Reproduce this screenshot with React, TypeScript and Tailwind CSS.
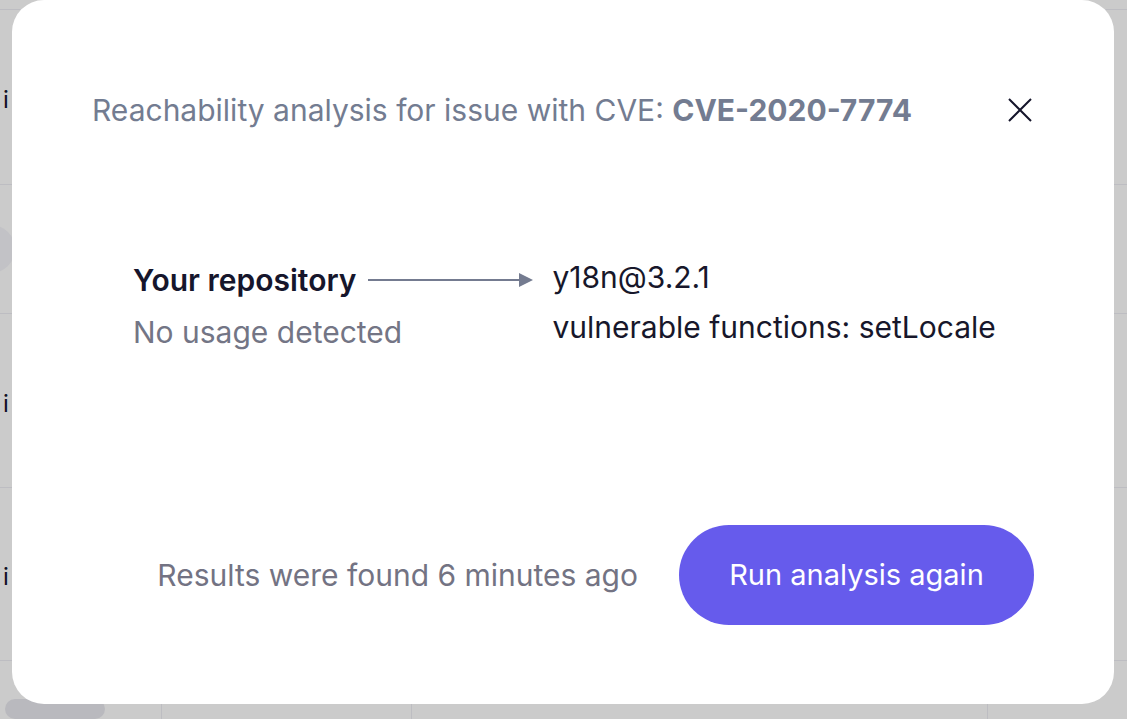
import React from 'react';

const rows = [
  { height: 'h-[178px]', letter: true },
  { height: 'h-[132px]', letter: false },
  { height: 'h-[177px]', letter: true },
  { height: 'h-[176px]', letter: true },
];

function BackgroundPage() {
  return (
    <div className="h-full w-full bg-[#cbcbcb] flex flex-col">
      <div className="h-[10px] border-b border-[#bdbdc2]" />
      {rows.map((row, i) => (
        <div key={i} className={`${row.height} border-b border-[#bdbdc2] flex items-center pl-[3px] pt-[6px] text-[24px] text-[#101025]`}>
          {row.letter ? 'i' : <div className="h-[48px] w-[48px] -ml-[36px] -mt-[6px] rounded-full bg-[#c2c2c6]" />}
        </div>
      ))}
      <div className="flex-1 flex">
        <div className="w-[162px] border-r border-[#bdbdc2] pt-[38px] pl-[5px]">
          <div className="h-[20px] w-[100px] rounded-full bg-[#b9b9be]" />
        </div>
        <div className="w-[250px] border-r border-[#bdbdc2]" />
        <div className="w-[576px] border-r border-[#bdbdc2]" />
      </div>
    </div>
  );
}

function Arrow() {
  return (
    <svg width="165" height="16" viewBox="0 0 165 16" className="shrink-0">
      <line x1="0" y1="8" x2="152" y2="8" stroke="#747b90" strokeWidth="2" />
      <polygon points="151,1 165,8 151,15" fill="#747b90" />
    </svg>
  );
}

function CloseIcon() {
  return (
    <svg width="24" height="24" viewBox="0 0 24 24" fill="none" stroke="currentColor" strokeWidth="2">
      <path d="M1 1L23 23M23 1L1 23" />
    </svg>
  );
}

export default function App() {
  return (
    <div className="relative h-[719px] w-[1127px] overflow-hidden" style={{ fontFamily: 'Inter, "Noto Sans", sans-serif' }}>
      <BackgroundPage />

      {/* Modal */}
      <div className="absolute left-[12px] top-0 h-[704px] w-[1102px] rounded-[32px] bg-white px-[80px] flex flex-col">
        {/* Header */}
        <div className="mt-[92px] flex items-center justify-between h-[36px]">
          <h2 className="text-[30px] leading-[36px] text-[#737c91]">
            Reachability analysis for issue with CVE: <span className="font-bold">CVE-2020-7774</span>
          </h2>
          <button className="h-[32px] w-[32px] flex items-center justify-center text-[#15152b] -mr-[2px]">
            <CloseIcon />
          </button>
        </div>

        {/* Body */}
        <div className="mt-[126px] pl-[41px] flex items-start">
          <div className="flex flex-col">
            <div className="flex items-center h-[52px]">
              <span className="text-[30px] font-semibold text-[#16162c]">Your repository</span>
              <div className="ml-[12px]">
                <Arrow />
              </div>
            </div>
            <div className="h-[52px] flex items-center text-[30px] text-[#737585]">No usage detected</div>
          </div>
          <div className="ml-[19px] flex flex-col -mt-[2px]">
            <div className="h-[50px] flex items-center text-[30px] text-[#17172b]">y18n@3.2.1</div>
            <div className="h-[50px] flex items-center text-[30px] text-[#17172b]">vulnerable functions: setLocale</div>
          </div>
        </div>

        {/* Footer */}
        <div className="mt-auto mb-[79px] flex items-center justify-end gap-[41px]">
          <span className="text-[30px] text-[#737383]">Results were found 6 minutes ago</span>
          <button className="h-[100px] w-[355px] rounded-full bg-[#665bec] text-white text-[29px]">
            Run analysis again
          </button>
        </div>
      </div>
    </div>
  );
}
